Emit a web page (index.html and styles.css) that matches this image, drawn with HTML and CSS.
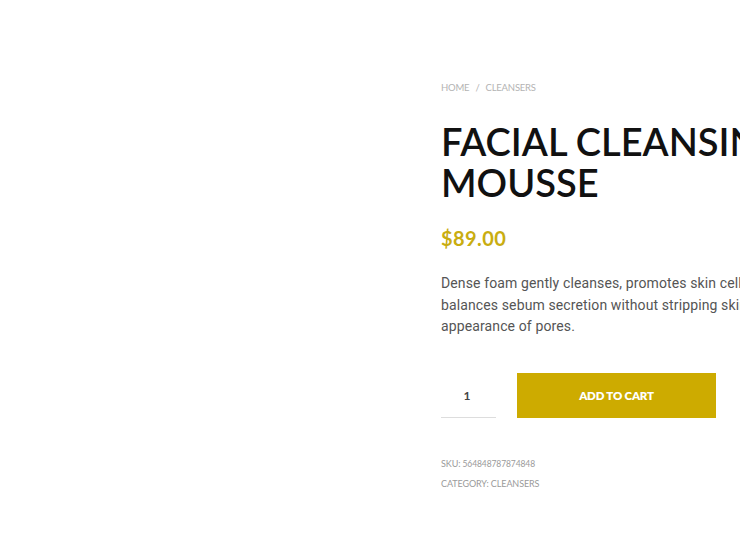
FILE: index.html
```html
<!DOCTYPE html>
<html>
<head>
<meta charset="utf-8">
<link rel="stylesheet" href="styles.css">
</head>
<body>
<div class="page">
  <div class="gallery"></div>
  <div class="summary">
    <nav class="crumbs"><span>HOME</span><span class="sep">/</span><span>CLEANSERS</span></nav>
    <h1 class="title">FACIAL CLEANSING<br>MOUSSE</h1>
    <div class="price">$89.00</div>
    <p class="desc">Dense foam gently cleanses, promotes skin cell renewal and balances sebum secretion without stripping skin, refining the appearance of pores.</p>
    <form class="cart">
      <div class="qty">1</div>
      <button type="button" class="add">ADD TO CART</button>
    </form>
    <div class="meta">
      <div>SKU: <span class="num">564848787874848</span></div>
      <div>CATEGORY: CLEANSERS</div>
    </div>
  </div>
</div>
</body>
</html>
```
FILE: styles.css
```css
html, body {
  margin: 0;
  padding: 0;
  background: #fff;
  overflow: hidden;
}
.page {
  display: flex;
  width: 740px;
  height: 555px;
  overflow: hidden;
}
.gallery {
  flex: 0 0 441px;
}
.summary {
  flex: 0 0 460px;
  padding-top: 82px;
  font-family: Lato, "Noto Sans", sans-serif;
}
.crumbs {
  font-size: 9.5px;
  color: #b3b3b3;
  letter-spacing: -0.2px;
  line-height: 12px;
  display: flex;
  gap: 6px;
}
.title {
  margin: 27px 0 0;
  font-family: Lato, sans-serif;
  font-weight: 600;
  font-size: 38px;
  line-height: 41px;
  color: #111;
  white-space: nowrap;
  letter-spacing: 0;
}
.price {
  margin-top: 23px;
  font-weight: 700;
  font-size: 20px;
  line-height: 24px;
  letter-spacing: 0.4px;
  color: #c9ad10;
}
.desc {
  margin: 23px 0 0;
  width: 440px;
  font-family: Roboto, sans-serif;
  font-size: 14px;
  letter-spacing: 0.12px;
  line-height: 21.5px;
  color: #555;
}
.cart {
  display: flex;
  align-items: flex-start;
  gap: 21px;
  margin-top: 35px;
}
.qty {
  width: 55px;
  height: 45px;
  box-sizing: border-box;
  border-bottom: 1px solid #ddd;
  text-align: center;
  line-height: 46px;
  font-size: 12px;
  font-weight: 700;
  color: #444;
  padding-right: 3px;
}
.add {
  width: 199px;
  height: 45px;
  border: 0;
  background: #cdab00;
  color: #fff;
  font-family: Lato, sans-serif;
  font-weight: 800;
  font-size: 11.5px;
  letter-spacing: -0.2px;
  padding: 0;
}
.meta {
  margin-top: 36px;
  font-size: 9px;
  color: #9a9a9a;
  line-height: 19px;
  letter-spacing: -0.1px;
}
.num {
  font-size: 8.5px;
}
```
